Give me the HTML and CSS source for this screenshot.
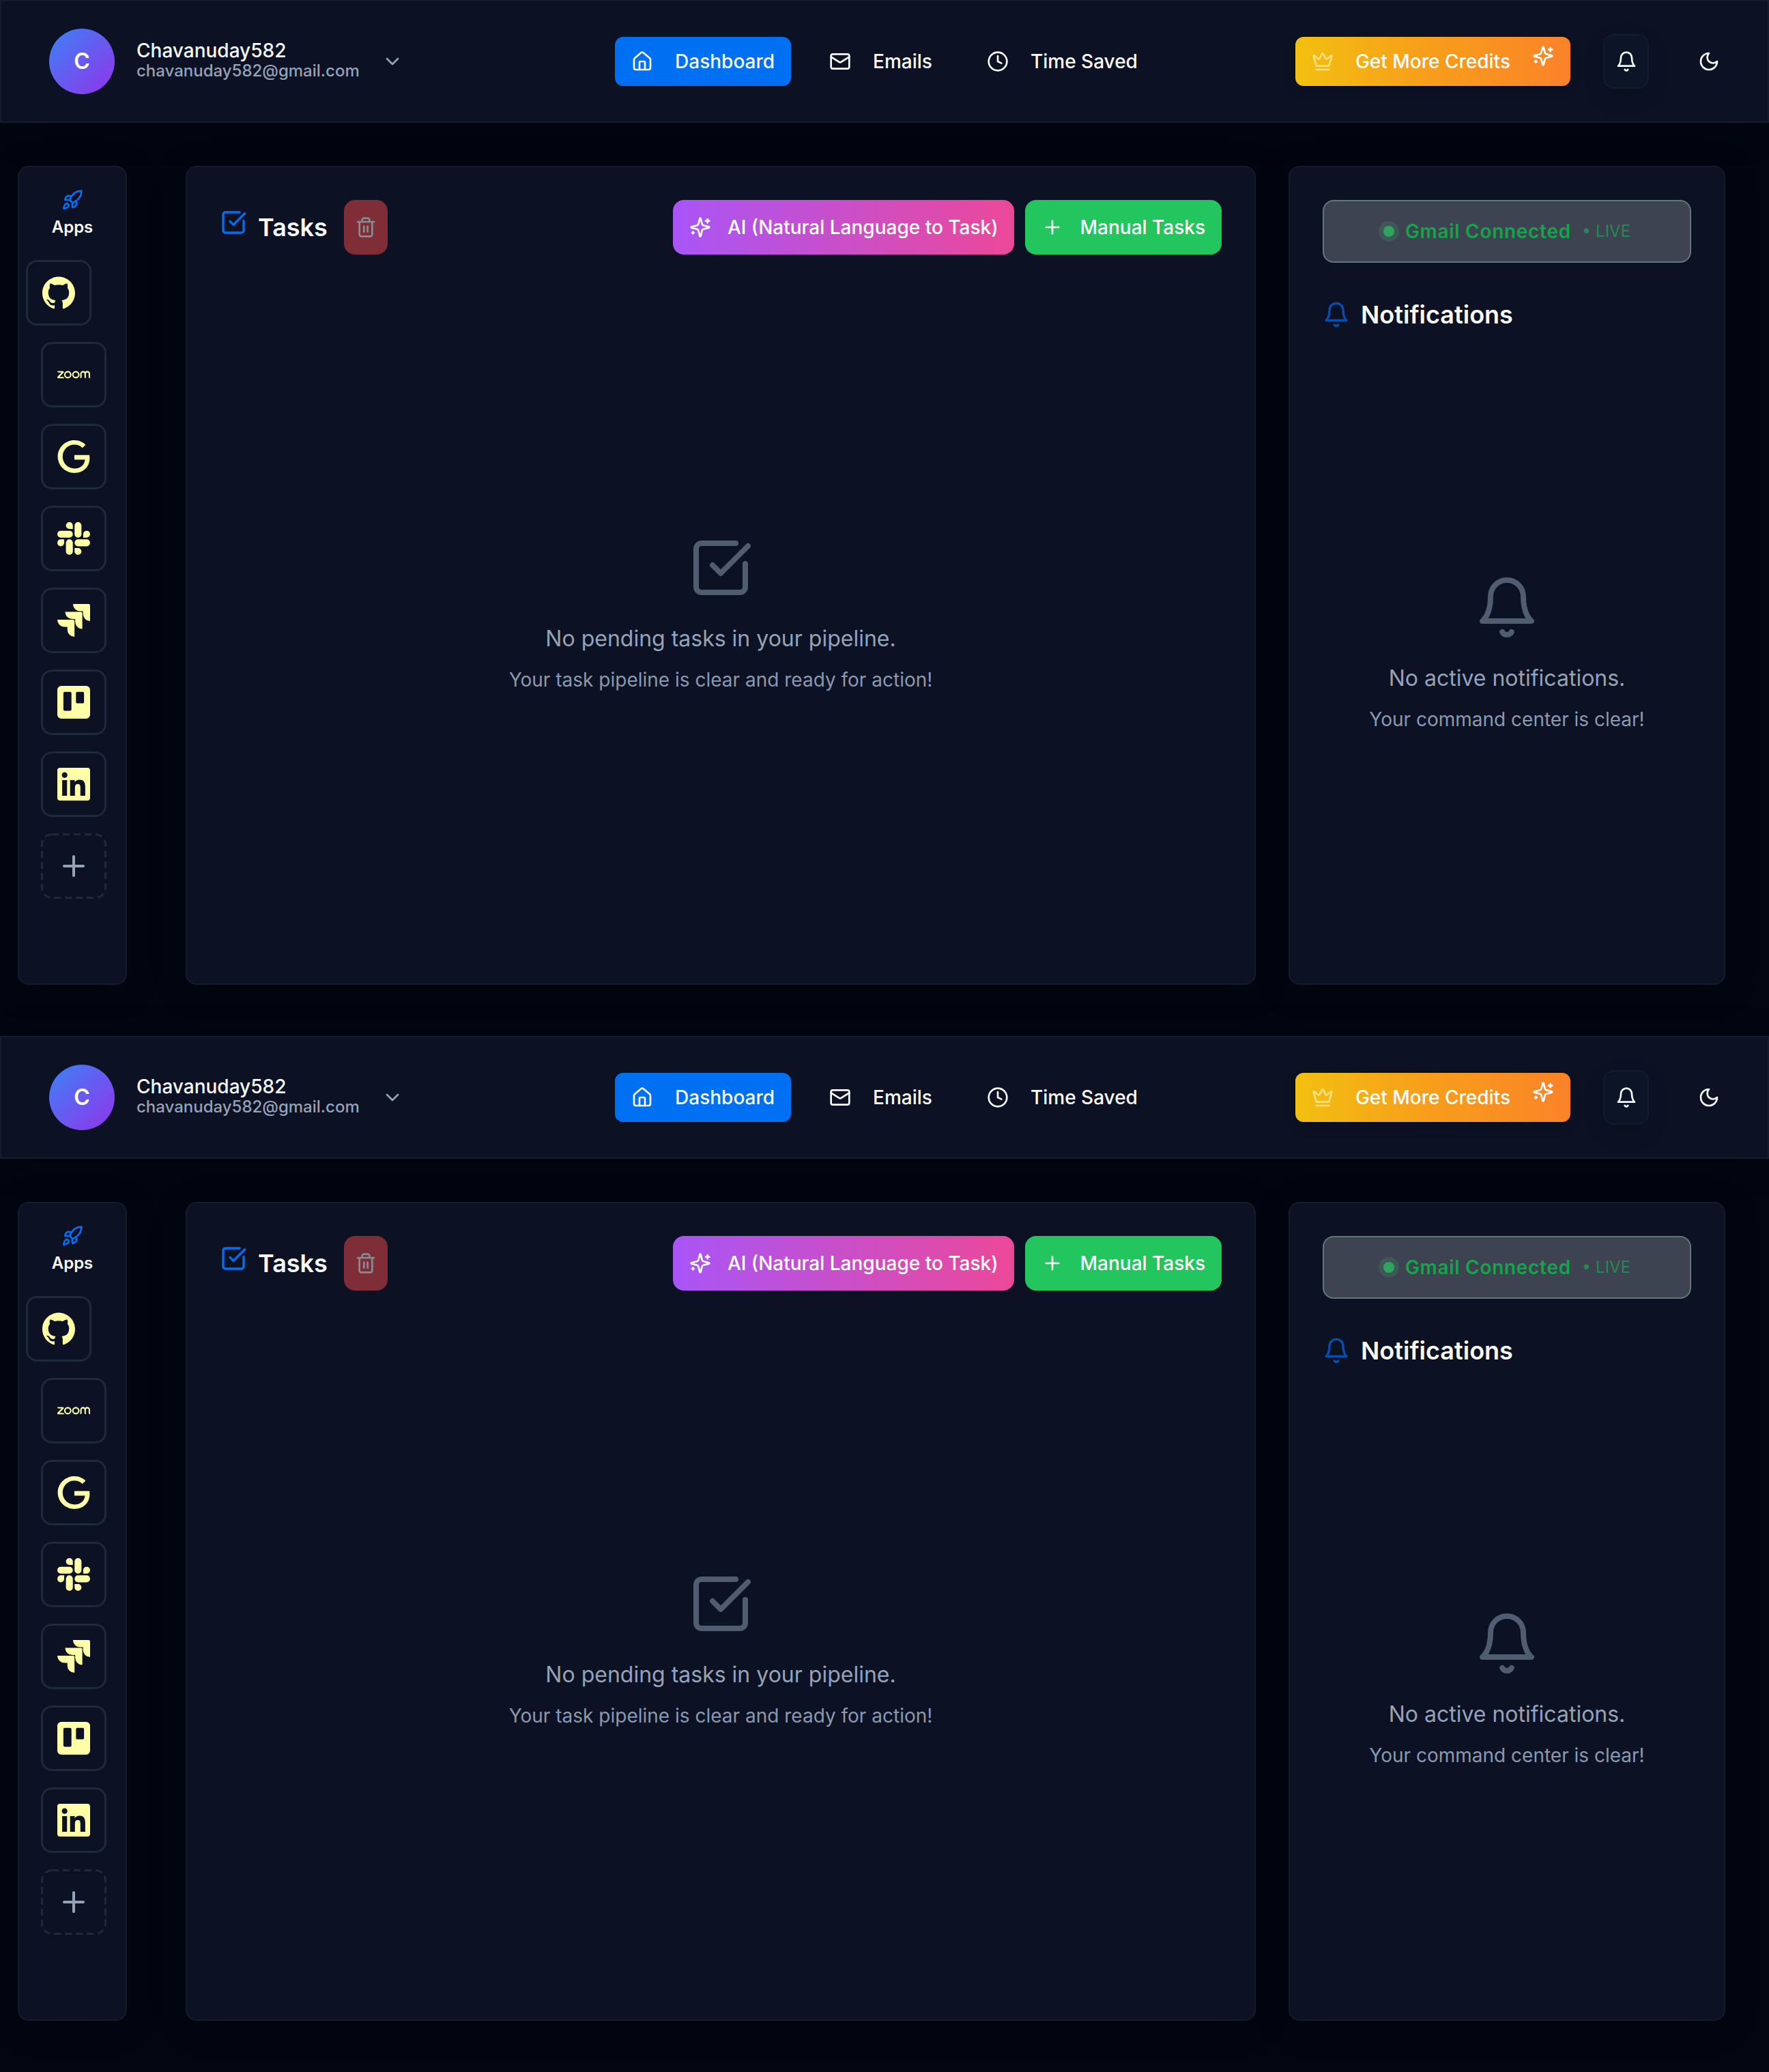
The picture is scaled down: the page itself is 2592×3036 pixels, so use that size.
FILE: index.html
```html
<!DOCTYPE html>
<html lang="en">
<head>
<meta charset="utf-8">
<meta name="viewport" content="width=device-width, initial-scale=1">
<title>Dashboard</title>
<link rel="stylesheet" href="styles.css">
</head>
<body>
<svg class="sprite" aria-hidden="true">
  <symbol id="chevron" viewBox="0 0 24 24"><path d="m6 9 6 6 6-6"/></symbol>
  <symbol id="home" viewBox="0 0 24 24"><path d="M15 21v-8a1 1 0 0 0-1-1h-4a1 1 0 0 0-1 1v8"/><path d="M3 10a2 2 0 0 1 .709-1.528l7-5.999a2 2 0 0 1 2.582 0l7 5.999A2 2 0 0 1 21 10v9a2 2 0 0 1-2 2H5a2 2 0 0 1-2-2z"/></symbol>
  <symbol id="mail" viewBox="0 0 24 24"><rect x="2" y="4" width="20" height="16" rx="2"/><path d="m22 7-8.97 5.7a1.94 1.94 0 0 1-2.06 0L2 7"/></symbol>
  <symbol id="clock" viewBox="0 0 24 24"><circle cx="12" cy="12" r="10"/><path d="M12 6v6l4 2"/></symbol>
  <symbol id="crown" viewBox="0 0 24 24"><path d="M11.562 3.266a.5.5 0 0 1 .876 0L15.39 8.87a1 1 0 0 0 1.516.294L21.183 5.5a.5.5 0 0 1 .798.519l-2.834 10.246a1 1 0 0 1-.956.734H5.81a1 1 0 0 1-.957-.734L2.02 6.02a.5.5 0 0 1 .798-.519l4.276 3.664a1 1 0 0 0 1.516-.294z"/><path d="M5 21h14"/></symbol>
  <symbol id="sparkles" viewBox="0 0 24 24"><path d="M9.937 15.5A2 2 0 0 0 8.5 14.063l-6.135-1.582a.5.5 0 0 1 0-.962L8.5 9.936A2 2 0 0 0 9.937 8.5l1.582-6.135a.5.5 0 0 1 .963 0L14.063 8.5A2 2 0 0 0 15.5 9.937l6.135 1.581a.5.5 0 0 1 0 .964L15.5 14.063a2 2 0 0 0-1.437 1.437l-1.582 6.135a.5.5 0 0 1-.963 0z"/><path d="M20 3v4M22 5h-4M4 17v2M5 18H3"/></symbol>
  <symbol id="bell" viewBox="0 0 24 24"><path d="M6 8a6 6 0 0 1 12 0c0 7 3 9 3 9H3s3-2 3-9"/><path d="M10.3 21a1.94 1.94 0 0 0 3.4 0"/></symbol>
  <symbol id="moon" viewBox="0 0 24 24"><path d="M12 3a6 6 0 0 0 9 9 9 9 0 1 1-9-9Z"/></symbol>
  <symbol id="rocket" viewBox="0 0 24 24"><path d="M4.5 16.5c-1.5 1.26-2 5-2 5s3.74-.5 5-2c.71-.84.7-2.13-.09-2.91a2.18 2.18 0 0 0-2.91-.09z"/><path d="m12 15-3-3a22 22 0 0 1 2-3.95A12.88 12.88 0 0 1 22 2c0 2.72-.78 7.5-6 11a22.35 22.35 0 0 1-4 2z"/><path d="M9 12H4s.55-3.03 2-4c1.62-1.08 5 0 5 0"/><path d="M12 15v5s3.03-.55 4-2c1.08-1.62 0-5 0-5"/></symbol>
  <symbol id="plus" viewBox="0 0 24 24"><path d="M5 12h14M12 5v14"/></symbol>
  <symbol id="add-tile" viewBox="0 0 96 96"><rect class="add-outline" x="1.5" y="1.5" width="93" height="93" rx="14.5"/><path d="M34 48h28M48 34v28"/></symbol>
  <symbol id="check" viewBox="0 0 24 24"><path d="M21 10.5V19a2 2 0 0 1-2 2H5a2 2 0 0 1-2-2V5a2 2 0 0 1 2-2h12.5"/><path d="m9 11 3 3L22 4"/></symbol>
  <symbol id="trash" viewBox="0 0 24 24"><path d="M3 6h18M19 6v14c0 1-1 2-2 2H7c-1 0-2-1-2-2V6M8 6V4c0-1 1-2 2-2h4c1 0 2 1 2 2v2M10 11v6M14 11v6"/></symbol>
  <symbol id="github" viewBox="0 0 24 24"><path d="M12 .297c-6.63 0-12 5.373-12 12 0 5.303 3.438 9.8 8.205 11.385.6.113.82-.258.82-.577 0-.285-.01-1.04-.015-2.04-3.338.724-4.042-1.61-4.042-1.61C4.422 18.07 3.633 17.7 3.633 17.7c-1.087-.744.084-.729.084-.729 1.205.084 1.838 1.236 1.838 1.236 1.07 1.835 2.809 1.305 3.495.998.108-.776.417-1.305.76-1.605-2.665-.3-5.466-1.332-5.466-5.93 0-1.31.465-2.38 1.235-3.22-.135-.303-.54-1.523.105-3.176 0 0 1.005-.322 3.3 1.23.96-.267 1.98-.399 3-.405 1.02.006 2.04.138 3 .405 2.28-1.552 3.285-1.23 3.285-1.23.645 1.653.24 2.873.12 3.176.765.84 1.23 1.91 1.23 3.22 0 4.61-2.805 5.625-5.475 5.92.42.36.81 1.096.81 2.22 0 1.606-.015 2.896-.015 3.286 0 .315.21.69.825.57C20.565 22.092 24 17.592 24 12.297c0-6.627-5.373-12-12-12"/></symbol>
  <symbol id="zoom" viewBox="0 0 24 24"><path d="M5.033 14.649H.743a.74.74 0 0 1-.686-.458.74.74 0 0 1 .16-.808L3.19 10.41H1.06A1.06 1.06 0 0 1 0 9.35h3.957c.301 0 .57.18.686.458a.74.74 0 0 1-.161.808L1.51 13.59h2.464c.585 0 1.06.475 1.06 1.06zM24 11.338c0-1.14-.927-2.066-2.066-2.066-.61 0-1.158.265-1.537.686a2.061 2.061 0 0 0-1.536-.686c-1.14 0-2.066.926-2.066 2.066v3.311a1.06 1.06 0 0 0 1.06-1.06v-2.251a1.004 1.004 0 0 1 2.013 0v2.251c0 .586.474 1.06 1.06 1.06v-3.311a1.004 1.004 0 0 1 2.012 0v2.251c0 .586.475 1.06 1.06 1.06zM16.265 12a2.728 2.728 0 1 1-5.457 0 2.728 2.728 0 0 1 5.457 0zm-1.06 0a1.669 1.669 0 1 0-3.338 0 1.669 1.669 0 0 0 3.338 0zm-4.82 0a2.728 2.728 0 1 1-5.458 0 2.728 2.728 0 0 1 5.457 0zm-1.06 0a1.669 1.669 0 1 0-3.338 0 1.669 1.669 0 0 0 3.338 0z"/></symbol>
  <symbol id="google" viewBox="0 0 24 24"><path d="M12.48 10.92v3.28h7.84c-.24 1.84-.853 3.187-1.787 4.133-1.147 1.147-2.933 2.4-6.053 2.4-4.827 0-8.6-3.893-8.6-8.72s3.773-8.72 8.6-8.72c2.6 0 4.507 1.027 5.907 2.347l2.307-2.307C18.747 1.44 16.133 0 12.48 0 5.867 0 .307 5.387.307 12s5.56 12 12.173 12c3.573 0 6.267-1.173 8.373-3.36 2.16-2.16 2.84-5.213 2.84-7.667 0-.76-.053-1.467-.173-2.053H12.48z"/></symbol>
  <symbol id="slack" viewBox="0 0 24 24"><path d="M5.042 15.165a2.528 2.528 0 0 1-2.52 2.523A2.528 2.528 0 0 1 0 15.165a2.527 2.527 0 0 1 2.522-2.52h2.52v2.52zM6.313 15.165a2.527 2.527 0 0 1 2.521-2.52 2.527 2.527 0 0 1 2.521 2.52v6.313A2.528 2.528 0 0 1 8.834 24a2.528 2.528 0 0 1-2.521-2.522v-6.313zM8.834 5.042a2.528 2.528 0 0 1-2.521-2.52A2.528 2.528 0 0 1 8.834 0a2.528 2.528 0 0 1 2.521 2.522v2.52H8.834zM8.834 6.313a2.528 2.528 0 0 1 2.521 2.521 2.528 2.528 0 0 1-2.521 2.521H2.522A2.528 2.528 0 0 1 0 8.834a2.528 2.528 0 0 1 2.522-2.521h6.312zM18.956 8.834a2.528 2.528 0 0 1 2.522-2.521A2.528 2.528 0 0 1 24 8.834a2.528 2.528 0 0 1-2.522 2.521h-2.522V8.834zM17.688 8.834a2.528 2.528 0 0 1-2.523 2.521 2.527 2.527 0 0 1-2.52-2.521V2.522A2.527 2.527 0 0 1 15.165 0a2.528 2.528 0 0 1 2.523 2.522v6.312zM15.165 18.956a2.528 2.528 0 0 1 2.523 2.522A2.528 2.528 0 0 1 15.165 24a2.527 2.527 0 0 1-2.52-2.522v-2.522h2.52zM15.165 17.688a2.527 2.527 0 0 1-2.52-2.523 2.526 2.526 0 0 1 2.52-2.52h6.313A2.527 2.527 0 0 1 24 15.165a2.528 2.528 0 0 1-2.522 2.523h-6.313z"/></symbol>
  <symbol id="jira" viewBox="0 0 24 24"><path d="M11.571 11.513H0a5.218 5.218 0 0 0 5.232 5.215h2.13v2.057A5.215 5.215 0 0 0 12.575 24V12.518a1.005 1.005 0 0 0-1.005-1.005zm5.723-5.756H5.736a5.215 5.215 0 0 0 5.215 5.214h2.129v2.058a5.218 5.218 0 0 0 5.215 5.214V6.758a1.001 1.001 0 0 0-1.001-1.001zM23.013 0H11.455a5.215 5.215 0 0 0 5.215 5.215h2.129v2.057A5.215 5.215 0 0 0 24 12.483V1.005A1.001 1.001 0 0 0 23.013 0Z"/></symbol>
  <symbol id="trello" viewBox="0 0 24 24"><path d="M21.147 0H2.853A2.86 2.86 0 000 2.853v18.294A2.86 2.86 0 002.853 24h18.294A2.86 2.86 0 0024 21.147V2.853A2.86 2.86 0 0021.147 0zM10.34 17.287a.953.953 0 01-.953.953h-4a.954.954 0 01-.954-.953V5.38a.953.953 0 01.954-.953h4a.954.954 0 01.953.953zm9.233-5.467a.944.944 0 01-.953.947h-4a.947.947 0 01-.953-.947V5.38a.953.953 0 01.953-.953h4a.954.954 0 01.953.953z"/></symbol>
  <symbol id="linkedin" viewBox="0 0 24 24"><path d="M20.447 20.452h-3.554v-5.569c0-1.328-.027-3.037-1.852-3.037-1.853 0-2.136 1.445-2.136 2.939v5.667H9.351V9h3.414v1.561h.046c.477-.9 1.637-1.85 3.37-1.85 3.601 0 4.267 2.37 4.267 5.455v6.286zM5.337 7.433c-1.144 0-2.063-.926-2.063-2.065 0-1.138.92-2.063 2.063-2.063 1.14 0 2.064.925 2.064 2.063 0 1.139-.925 2.065-2.064 2.065zm1.782 13.019H3.555V9h3.564v11.452zM22.225 0H1.771C.792 0 0 .774 0 1.729v20.542C0 23.227.792 24 1.771 24h20.451C23.2 24 24 23.227 24 22.271V1.729C24 .774 23.2 0 22.222 0h.003z"/></symbol>
</svg>

<div class="screen">
  <header class="topbar">
    <button class="profile" type="button">
      <span class="avatar">C</span>
      <span class="who"><span class="name">Chavanuday582</span><span class="email">chavanuday582@gmail.com</span></span>
      <svg class="icon muted"><use href="#chevron"/></svg>
    </button>
    <nav class="nav">
      <a class="nav-link active" href="#dashboard"><svg class="icon"><use href="#home"/></svg>Dashboard</a>
      <a class="nav-link" href="#emails"><svg class="icon"><use href="#mail"/></svg>Emails</a>
      <a class="nav-link" href="#time"><svg class="icon"><use href="#clock"/></svg>Time Saved</a>
    </nav>
    <div class="actions">
      <button class="credits" type="button"><svg class="icon crown"><use href="#crown"/></svg>Get More Credits<svg class="icon spark"><use href="#sparkles"/></svg></button>
      <button class="bell-btn" type="button" aria-label="Notifications"><svg class="icon"><use href="#bell"/></svg></button>
      <button class="theme-btn" type="button" aria-label="Toggle theme"><svg class="icon"><use href="#moon"/></svg></button>
    </div>
  </header>
  <div class="layout">
    <aside class="card apps">
      <svg class="icon blue"><use href="#rocket"/></svg>
      <h2 class="apps-title">Apps</h2>
      <div class="app-list">
        <button class="app raised" type="button" aria-label="GitHub"><svg class="logo"><use href="#github"/></svg></button>
        <button class="app" type="button" aria-label="Zoom"><svg class="logo"><use href="#zoom"/></svg></button>
        <button class="app" type="button" aria-label="Google"><svg class="logo"><use href="#google"/></svg></button>
        <button class="app" type="button" aria-label="Slack"><svg class="logo"><use href="#slack"/></svg></button>
        <button class="app" type="button" aria-label="Jira"><svg class="logo"><use href="#jira"/></svg></button>
        <button class="app" type="button" aria-label="Trello"><svg class="logo"><use href="#trello"/></svg></button>
        <button class="app" type="button" aria-label="LinkedIn"><svg class="logo"><use href="#linkedin"/></svg></button>
        <button class="app add" type="button" aria-label="Add app"><svg class="icon add-icon"><use href="#add-tile"/></svg></button>
      </div>
    </aside>
    <main class="card panel">
      <div class="panel-head">
        <h1 class="title tasks-title"><svg class="icon title-icon blue"><use href="#check"/></svg>Tasks</h1>
        <button class="delete" type="button" aria-label="Delete tasks" disabled><svg class="icon"><use href="#trash"/></svg></button>
        <div class="task-actions">
          <button class="btn ai" type="button"><svg class="icon"><use href="#sparkles"/></svg>AI (Natural Language to Task)</button>
          <button class="btn manual" type="button"><svg class="icon"><use href="#plus"/></svg>Manual Tasks</button>
        </div>
      </div>
      <div class="empty">
        <svg class="icon empty-icon"><use href="#check"/></svg>
        <p class="empty-title">No pending tasks in your pipeline.</p>
        <p class="empty-text">Your task pipeline is clear and ready for action!</p>
      </div>
    </main>
    <section class="card panel">
      <div class="gmail"><span class="dot"></span><span class="gmail-text">Gmail Connected</span><span class="live">• LIVE</span></div>
      <h2 class="title notif-title"><svg class="icon title-icon deep"><use href="#bell"/></svg>Notifications</h2>
      <div class="empty">
        <svg class="icon empty-icon"><use href="#bell"/></svg>
        <p class="empty-title">No active notifications.</p>
        <p class="empty-text">Your command center is clear!</p>
      </div>
    </section>
  </div>
</div>

<div class="screen">
  <header class="topbar">
    <button class="profile" type="button">
      <span class="avatar">C</span>
      <span class="who"><span class="name">Chavanuday582</span><span class="email">chavanuday582@gmail.com</span></span>
      <svg class="icon muted"><use href="#chevron"/></svg>
    </button>
    <nav class="nav">
      <a class="nav-link active" href="#dashboard"><svg class="icon"><use href="#home"/></svg>Dashboard</a>
      <a class="nav-link" href="#emails"><svg class="icon"><use href="#mail"/></svg>Emails</a>
      <a class="nav-link" href="#time"><svg class="icon"><use href="#clock"/></svg>Time Saved</a>
    </nav>
    <div class="actions">
      <button class="credits" type="button"><svg class="icon crown"><use href="#crown"/></svg>Get More Credits<svg class="icon spark"><use href="#sparkles"/></svg></button>
      <button class="bell-btn" type="button" aria-label="Notifications"><svg class="icon"><use href="#bell"/></svg></button>
      <button class="theme-btn" type="button" aria-label="Toggle theme"><svg class="icon"><use href="#moon"/></svg></button>
    </div>
  </header>
  <div class="layout">
    <aside class="card apps">
      <svg class="icon blue"><use href="#rocket"/></svg>
      <h2 class="apps-title">Apps</h2>
      <div class="app-list">
        <button class="app raised" type="button" aria-label="GitHub"><svg class="logo"><use href="#github"/></svg></button>
        <button class="app" type="button" aria-label="Zoom"><svg class="logo"><use href="#zoom"/></svg></button>
        <button class="app" type="button" aria-label="Google"><svg class="logo"><use href="#google"/></svg></button>
        <button class="app" type="button" aria-label="Slack"><svg class="logo"><use href="#slack"/></svg></button>
        <button class="app" type="button" aria-label="Jira"><svg class="logo"><use href="#jira"/></svg></button>
        <button class="app" type="button" aria-label="Trello"><svg class="logo"><use href="#trello"/></svg></button>
        <button class="app" type="button" aria-label="LinkedIn"><svg class="logo"><use href="#linkedin"/></svg></button>
        <button class="app add" type="button" aria-label="Add app"><svg class="icon add-icon"><use href="#add-tile"/></svg></button>
      </div>
    </aside>
    <main class="card panel">
      <div class="panel-head">
        <h1 class="title tasks-title"><svg class="icon title-icon blue"><use href="#check"/></svg>Tasks</h1>
        <button class="delete" type="button" aria-label="Delete tasks" disabled><svg class="icon"><use href="#trash"/></svg></button>
        <div class="task-actions">
          <button class="btn ai" type="button"><svg class="icon"><use href="#sparkles"/></svg>AI (Natural Language to Task)</button>
          <button class="btn manual" type="button"><svg class="icon"><use href="#plus"/></svg>Manual Tasks</button>
        </div>
      </div>
      <div class="empty">
        <svg class="icon empty-icon"><use href="#check"/></svg>
        <p class="empty-title">No pending tasks in your pipeline.</p>
        <p class="empty-text">Your task pipeline is clear and ready for action!</p>
      </div>
    </main>
    <section class="card panel">
      <div class="gmail"><span class="dot"></span><span class="gmail-text">Gmail Connected</span><span class="live">• LIVE</span></div>
      <h2 class="title notif-title"><svg class="icon title-icon deep"><use href="#bell"/></svg>Notifications</h2>
      <div class="empty">
        <svg class="icon empty-icon"><use href="#bell"/></svg>
        <p class="empty-title">No active notifications.</p>
        <p class="empty-text">Your command center is clear!</p>
      </div>
    </section>
  </div>
</div>
</body>
</html>
```

FILE: styles.css
```css
* { box-sizing: border-box; }

body {
  margin: 0;
  background: #020611;
  color: #f8fafc;
  font-family: Inter, "Liberation Sans", sans-serif;
  font-size: 28px;
  line-height: 40px;
}

h1, h2, p { margin: 0; }

button {
  border: 0;
  padding: 0;
  background: none;
  color: inherit;
  font: inherit;
}

.sprite { display: none; }

.icon {
  flex: none;
  width: 32px;
  height: 32px;
  fill: none;
  stroke: currentColor;
  stroke-width: 2;
  stroke-linecap: round;
  stroke-linejoin: round;
}

.muted { color: #94a3b8; }
.blue { color: #0070f3; }
.deep { color: #0450b0; }

.screen {
  display: flex;
  flex-direction: column;
  min-height: 50vh;
}

/* Top bar */
.topbar {
  display: grid;
  grid-template-columns: 1fr auto 1fr;
  align-items: center;
  padding: 40px 46px;
  background: #0c1224;
  border: 2px solid #141d2f;
  box-shadow: 0 8px 48px rgba(0, 0, 0, 0.3);
}

.profile {
  display: flex;
  align-items: center;
  justify-self: start;
  gap: 32px;
  padding: 0 24px;
  font-weight: 500;
  text-align: left;
}

.avatar {
  display: grid;
  place-items: center;
  width: 96px;
  height: 96px;
  border-radius: 50%;
  background: linear-gradient(135deg, #3b82f6, #9333ea);
  color: #fff;
  font-size: 32px;
  font-weight: 600;
}

.who {
  display: flex;
  flex-direction: column;
}

.name { line-height: 28px; }

.email {
  color: #94a3b8;
  font-size: 24px;
  line-height: 32px;
}

.nav {
  display: flex;
  gap: 32px;
}

.nav-link {
  display: flex;
  align-items: center;
  gap: 32px;
  padding: 16px 24px;
  border-radius: 12px;
  color: #f8fafc;
  font-weight: 500;
  text-decoration: none;
}

.nav-link.active { background: #0070f3; }

.actions {
  display: flex;
  align-items: center;
  justify-self: end;
  gap: 48px;
}

.credits {
  display: flex;
  align-items: center;
  gap: 32px;
  padding: 16px 24px;
  border-radius: 12px;
  background: linear-gradient(90deg, #f2c010, #f7a01a 45%, #fb8228);
  color: #fff;
  font-weight: 500;
  box-shadow: 0 8px 16px rgba(0, 0, 0, 0.15);
}

.crown { color: #fde080; }
.spark { margin: -8px 0 8px; }

.bell-btn {
  display: grid;
  place-items: center;
  width: 67px;
  height: 80px;
  border: 2px solid #131c2c;
  border-radius: 16px;
  background: #0c1527;
  box-shadow: 0 12px 32px rgba(0, 0, 0, 0.12);
}

.theme-btn {
  display: grid;
  place-items: center;
  width: 80px;
  height: 80px;
}

/* Page columns */
.layout {
  flex: 1;
  display: grid;
  grid-template-columns: 160px minmax(0, 1fr) 640px;
  column-gap: 48px;
  padding: 63px 64px 75px 26px;
}

.card {
  background: #0c1224;
  border: 2px solid #131c2d;
  border-radius: 16px;
  box-shadow: 0 8px 48px rgba(0, 0, 0, 0.3);
}

.apps {
  display: flex;
  flex-direction: column;
  align-items: center;
  padding: 32px 0;
}

.apps-title {
  margin-bottom: 24px;
  font-size: 24px;
  font-weight: 600;
  line-height: 48px;
}

.app-list {
  display: flex;
  flex-direction: column;
  align-self: stretch;
  gap: 24px;
  padding-left: 32px;
}

.app {
  display: grid;
  place-items: center;
  width: 96px;
  height: 96px;
  border: 3px solid #1e293b;
  border-radius: 16px;
}

.raised { margin-left: -22px; }

.add {
  border: 0;
  color: #94a3b8;
}

.logo {
  width: 48px;
  height: 48px;
  fill: #ffffa8;
}

.add-icon {
  width: 96px;
  height: 96px;
  stroke-width: 4;
}

.add-outline {
  stroke: #1e293b;
  stroke-width: 3;
  stroke-linecap: butt;
  stroke-dasharray: 10 6;
}

.panel {
  display: flex;
  flex-direction: column;
  padding: 48px;
}

main.panel { margin-left: 38px; }

.panel-head {
  display: flex;
  align-items: center;
  gap: 24px;
}

.title {
  display: flex;
  gap: 16px;
  font-size: 36px;
  font-weight: 600;
  line-height: 56px;
}

.tasks-title { align-items: baseline; }

.notif-title {
  align-items: center;
  margin-top: 48px;
}

.title-icon {
  width: 40px;
  height: 40px;
}

.delete {
  display: grid;
  place-items: center;
  width: 64px;
  height: 80px;
  border-radius: 16px;
  background: #7f2d36;
  color: #868b94;
}

.task-actions {
  display: flex;
  gap: 16px;
  margin-left: auto;
}

.btn {
  display: flex;
  align-items: center;
  gap: 24px;
  padding: 20px 24px;
  border-radius: 16px;
  color: #fff;
  font-weight: 500;
}

.ai { background: linear-gradient(90deg, #a855f7, #ec4899); }
.manual { background: #22c55e; }

/* Gmail status */
.gmail {
  display: flex;
  align-items: center;
  justify-content: center;
  padding: 24px;
  border: 2px solid #5c7a78;
  border-radius: 16px;
  background: #3d4350;
}

.dot {
  width: 16px;
  height: 16px;
  margin-right: 16px;
  border-radius: 50%;
  background: #30a35f;
  box-shadow: 0 0 0 7px #3e5857;
}

.gmail-text {
  margin-right: 16px;
  color: #16a34a;
  font-weight: 600;
  letter-spacing: 0.025em;
}

.live {
  color: #258a52;
  font-size: 24px;
}

/* Empty states */
.empty {
  flex: 1;
  display: flex;
  flex-direction: column;
  align-items: center;
  justify-content: center;
  padding-top: 34px;
  color: #94a3b8;
  text-align: center;
}

.empty-icon {
  width: 96px;
  height: 96px;
  margin-bottom: 32px;
  color: #505c6f;
}

.empty-title {
  margin-bottom: 16px;
  font-size: 32px;
  line-height: 48px;
}

.empty-text { color: #8a99af; }
```
